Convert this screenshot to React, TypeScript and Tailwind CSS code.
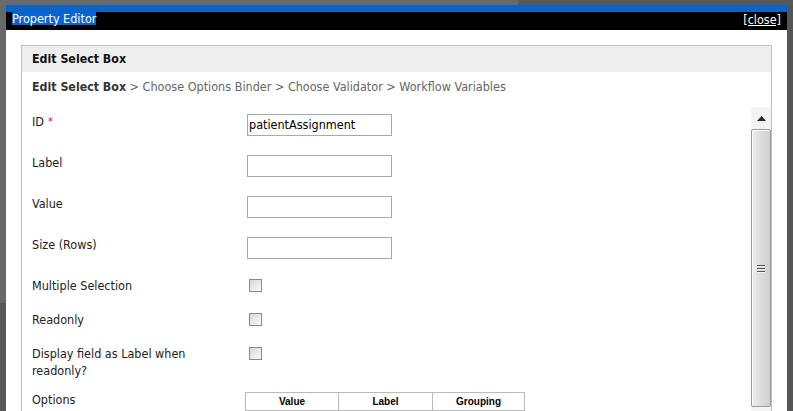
import React from "react";

const font = { fontFamily: "'DejaVu Sans Condensed', 'Liberation Sans', Arial, sans-serif" };
const tableFont = { fontFamily: "'Liberation Sans', Arial, sans-serif" };

function Checkbox() {
  return (
    <div className="w-[13px] h-[13px] border border-[#8a8a8a] bg-gradient-to-br from-[#d8d8d8] to-[#fafafa]" />
  );
}

function TextInput({ value = "" }: { value?: string }) {
  return (
    <div className="w-[145px] h-[22px] border border-[#a9a9a9] bg-white flex items-center pl-[1px] text-[12.5px] text-black leading-[16px]">
      {value}
    </div>
  );
}

function InputRow({ label, value, required }: { label: string; value?: string; required?: boolean }) {
  return (
    <div className="flex h-[41px]">
      <div className="w-[215px] leading-[17px]">
        {label}
        {required && <span className="text-[#e0004a] ml-[4px] text-[11px] align-top">*</span>}
      </div>
      <div className="pt-[1px]">
        <TextInput value={value} />
      </div>
    </div>
  );
}

function CheckRow({ label, h, off }: { label: React.ReactNode; h: string; off: string }) {
  return (
    <div className={`flex ${h}`}>
      <div className="w-[217px] leading-[17px]">{label}</div>
      <div className={off}>
        <Checkbox />
      </div>
    </div>
  );
}

function Scrollbar() {
  return (
    <div className="w-[20px] flex flex-col bg-[#f0f0f0]">
      <div className="h-[22px] flex items-center justify-center bg-[#f3f3f3]">
        <svg width="9" height="5" viewBox="0 0 9 5">
          <path d="M4.5 0 L9 5 L0 5 Z" fill="#2b2b2b" />
        </svg>
      </div>
      <div className="flex-1 border border-[#9a9a9a] rounded-[2px] bg-gradient-to-r from-[#eeeeee] via-[#dcdcdc] to-[#cfcfcf] flex items-center justify-center shadow-[inset_1px_1px_0_#fafafa]">
        <div className="flex flex-col gap-[2px]">
          <div className="w-[8px] h-[1px] bg-[#555] shadow-[0_1px_0_#f4f4f4]" />
          <div className="w-[8px] h-[1px] bg-[#555] shadow-[0_1px_0_#f4f4f4]" />
          <div className="w-[8px] h-[1px] bg-[#555] shadow-[0_1px_0_#f4f4f4]" />
        </div>
      </div>
      <div className="h-[4px] bg-[#f4f4f4]" />
    </div>
  );
}

export default function App() {
  return (
    <div className="w-[793px] h-[411px] overflow-hidden bg-[#5a5a5a] flex flex-col" style={font}>
      <div className="h-[5px] flex shrink-0">
        <div className="w-[518px] bg-[#6a6a6a]" />
        <div className="flex-1 bg-[#595959]" />
      </div>
      <div className="flex flex-1 min-h-0">
        <div className="w-[6px] flex flex-col">
          <div className="h-[298px] bg-[#686868]" />
          <div className="flex-1 bg-[#575757]" />
        </div>
        <div className="w-[781px] flex flex-col bg-white">
          <div className="h-[7px] bg-[#0a64c8] shrink-0" />
          <div className="h-[18px] bg-black flex justify-between items-start px-[6px] shrink-0">
            <span className="bg-[#0b62d0] text-white text-[12.5px] leading-[13px]">Property Editor</span>
            <span className="text-white text-[12.5px] leading-[13px] mt-[1px] underline">[close]</span>
          </div>
          <div className="flex-1 min-h-0 pt-[15px] px-[15px]">
            <div className="h-full border-l border-t border-r border-[#c0c0c0] flex flex-col text-[#222]">
              <div className="h-[26px] bg-[#eeeeee] flex items-center pl-[10px] text-[12.3px] font-bold text-[#111]">
                Edit Select Box
              </div>
              <div className="h-[35px] pl-[10px] pt-[7px] text-[12.5px] leading-[15px] text-[#666]">
                <span className="font-bold text-[#333] text-[12.3px]">Edit Select Box</span> &gt; Choose Options Binder &gt; Choose Validator &gt; Workflow Variables
              </div>
              <div className="flex-1 min-h-0 flex">
                <div className="flex-1 pl-[10px] pt-[6px] text-[12.5px] overflow-hidden">
                  <InputRow label="ID" value="patientAssignment" required />
                  <InputRow label="Label" />
                  <InputRow label="Value" />
                  <InputRow label="Size (Rows)" />
                  <CheckRow label="Multiple Selection" h="h-[34px]" off="pt-[2px]" />
                  <CheckRow label="Readonly" h="h-[34px]" off="pt-[2px]" />
                  <CheckRow
                    label={
                      <>
                        Display field as Label when
                        <br />
                        readonly?
                      </>
                    }
                    h="h-[46px]"
                    off="pt-[2px]"
                  />
                  <div className="flex">
                    <div className="w-[213px] leading-[17px]">Options</div>
                    <div className="pt-[1px]">
                      <div
                        className="w-[280px] h-[19px] border border-[#bbbbbb] flex text-[10px] font-bold text-black"
                        style={tableFont}
                      >
                        <div className="w-[93px] border-r border-[#bbbbbb] flex items-center justify-center">Value</div>
                        <div className="w-[94px] border-r border-[#bbbbbb] flex items-center justify-center">Label</div>
                        <div className="flex-1 flex items-center justify-center">Grouping</div>
                      </div>
                    </div>
                  </div>
                </div>
                <div className="flex">
                  <Scrollbar />
                </div>
              </div>
            </div>
          </div>
        </div>
        <div className="flex-1 bg-[#555555]" />
      </div>
    </div>
  );
}
